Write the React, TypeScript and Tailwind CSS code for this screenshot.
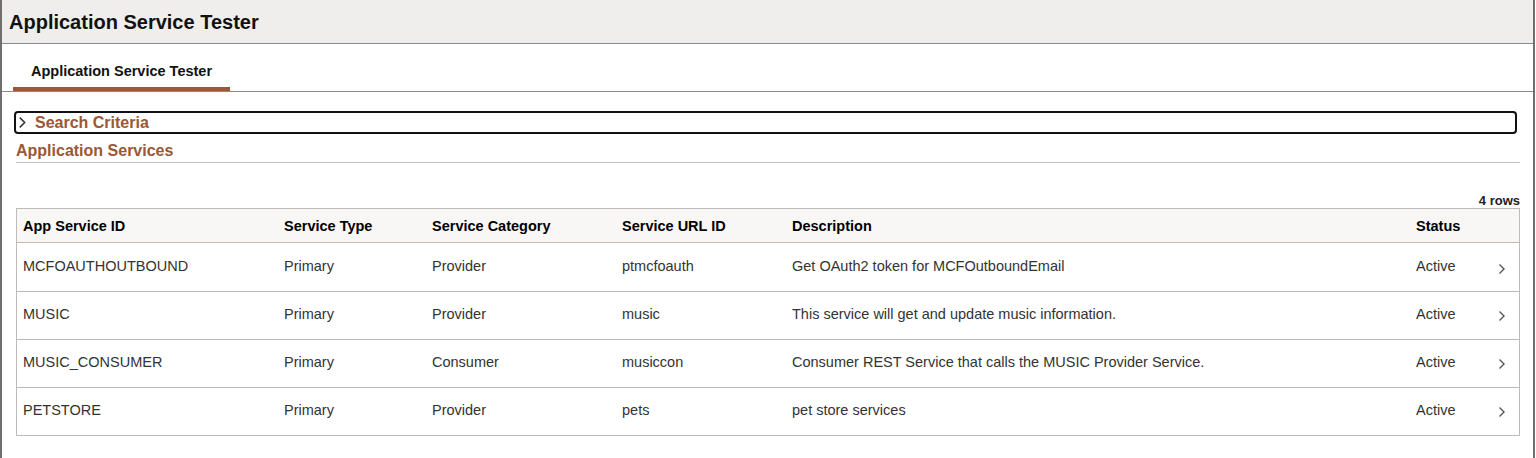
import { ReactNode } from 'react'

const rows = [
  { id: 'MCFOAUTHOUTBOUND', type: 'Primary', category: 'Provider', url: 'ptmcfoauth', description: 'Get OAuth2 token for MCFOutboundEmail', status: 'Active' },
  { id: 'MUSIC', type: 'Primary', category: 'Provider', url: 'music', description: 'This service will get and update music information.', status: 'Active' },
  { id: 'MUSIC_CONSUMER', type: 'Primary', category: 'Consumer', url: 'musiccon', description: 'Consumer REST Service that calls the MUSIC Provider Service.', status: 'Active' },
  { id: 'PETSTORE', type: 'Primary', category: 'Provider', url: 'pets', description: 'pet store services', status: 'Active' },
]

const cols = 'grid grid-cols-[261px_148px_190px_170px_624px_80px_29px]'

function Cell({ children, bold }: { children?: ReactNode; bold?: boolean }) {
  return (
    <div className={`pl-[6px] whitespace-nowrap ${bold ? 'font-bold text-black' : 'text-[#333]'}`}>
      {children}
    </div>
  )
}

function Chevron({ className }: { className?: string }) {
  return (
    <svg viewBox="0 0 8 12" className={className} fill="none">
      <path d="M1.5 1.5 L6 6 L1.5 10.5" stroke="currentColor" strokeWidth="1.4" />
    </svg>
  )
}

export default function App() {
  return (
    <div className="w-[1535px] min-h-[458px] bg-white border-x-2 border-[#6f6f6f] font-['Liberation_Sans',Arial,sans-serif]">
      {/* Page header */}
      <div className="h-[44px] bg-[#efeeed] border-b border-[#8a8a8a] flex items-center pl-[7px]">
        <h1 className="text-[20px] font-bold text-[#111] leading-none">Application Service Tester</h1>
      </div>

      {/* Tabs */}
      <div className="border-b border-[#8a8a8a] pl-[11px] flex">
        <div className="px-[18px] pt-[17px] pb-[6px] leading-[20px] border-b-4 border-[#a3572f] text-[14.5px] font-bold text-[#111]">
          Application Service Tester
        </div>
      </div>

      <div className="pl-[14px] pr-[13px]">
        {/* Search criteria */}
        <div className="mt-[19px] -ml-[2px] w-[1503px] h-[23px] border-2 border-[#111] rounded-[4px] flex items-center">
          <Chevron className="w-[9px] h-[13px] ml-[2px] text-[#333]" />
          <span className="ml-[8px] text-[16px] font-bold text-[#9a5834] leading-none">Search Criteria</span>
        </div>

        {/* Section heading */}
        <div className="mt-[6px] pt-[1px] pb-[1px] border-b border-[#c6c1bc]">
          <h2 className="text-[16px] leading-[20px] font-bold text-[#9a5834]">Application Services</h2>
        </div>

        <div className="mt-[30px] text-right text-[13px] leading-[15px] font-bold text-[#222]">4 rows</div>

        {/* Grid */}
        <div className="border border-[#c0bbb6] text-[14.5px]">
          <div className={`${cols} h-[33px] pt-[2px] items-center bg-[#f8f7f6]`}>
            <Cell bold>App Service ID</Cell>
            <Cell bold>Service Type</Cell>
            <Cell bold>Service Category</Cell>
            <Cell bold>Service URL ID</Cell>
            <Cell bold>Description</Cell>
            <Cell bold>Status</Cell>
            <div />
          </div>
          {rows.map((r, i) => (
            <div
              key={r.id}
              className={`${cols} ${i === 0 ? 'h-[49px]' : 'h-[48px] pb-[2px]'} items-center border-t border-[#c0bbb6]`}
            >
              <Cell>{r.id}</Cell>
              <Cell>{r.type}</Cell>
              <Cell>{r.category}</Cell>
              <Cell>{r.url}</Cell>
              <Cell>{r.description}</Cell>
              <Cell>{r.status}</Cell>
              <div className="pl-[8px] pt-[3px]">
                <Chevron className="w-[8px] h-[12px] text-[#555]" />
              </div>
            </div>
          ))}
        </div>
      </div>
    </div>
  )
}
